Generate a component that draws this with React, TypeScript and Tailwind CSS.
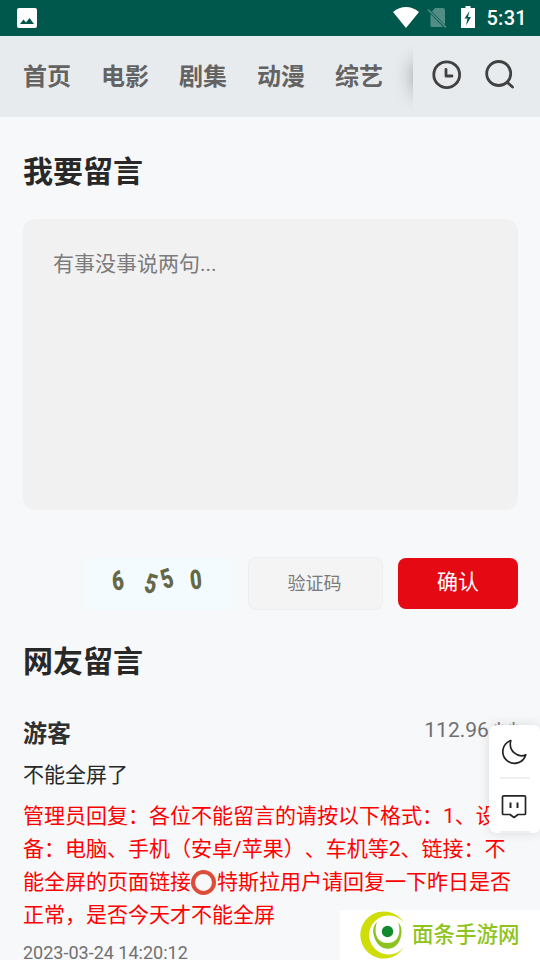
import React from 'react';

const NAV_ITEMS = ['首页', '电影', '剧集', '动漫', '综艺'];

const CAPTCHA = [
  { char: '6', className: 'left-[26px] top-[13px] -rotate-6' },
  { char: '5', className: 'left-[59px] top-[16px] rotate-[15deg]' },
  { char: '5', className: 'left-[75px] top-[11px] -rotate-[18deg]' },
  { char: '0', className: 'left-[104px] top-[12px] -rotate-6' },
];

function StatusBar() {
  return (
    <div className="flex h-9 items-center bg-[#00574b] pl-[17px] pr-[13px] text-white">
      <svg width="20" height="20" viewBox="0 0 20 20" className="block">
        <path fill="currentColor" fillRule="evenodd" d="M2 0h16q2 0 2 2v16q0 2-2 2H2q-2 0-2-2V2Q0 0 2 0Zm1 16h14l-4.500-6-3.500 4.600-2.500-3L3 16Z" />
      </svg>
      <svg width="83" height="24" viewBox="0 0 83 24" className="ml-auto mr-[10px] block">
        <path fill="currentColor" d="M0 6C8-.7 18-.7 26 6L13 22Z" />
        <g opacity=".32">
          <path fill="currentColor" d="M42 2h8q2 0 2 2v15L39 5.500Z M37.500 8l12.800 13H39q-1.500 0-1.500-1.500Z" />
          <path stroke="currentColor" strokeWidth="1.600" d="m35 3.500 18 18" />
        </g>
        <path fill="currentColor" fillRule="evenodd" d="M72.500 0h5v2h4.500v20h-14V2h4.500ZM76.500 5l-5 7.500h3l-1.500 7 5-8.500h-3Z" />
      </svg>
      <span className="font-['Roboto',sans-serif] text-[20px] font-medium leading-9 tracking-[0.3px]">5:31</span>
    </div>
  );
}

function Header() {
  return (
    <header className="flex h-[81px] items-center bg-[#e8ebee] pb-1">
      <nav className="flex h-[66px] w-[413px] items-center gap-[30px] overflow-hidden pl-[23px] pt-1 text-[24px] font-bold text-[#636363]">
        {NAV_ITEMS.map((item) => (
          <a key={item} className="shrink-0 whitespace-nowrap">{item}</a>
        ))}
        <span className="ml-[2px] h-[30px] w-5 shrink-0 shadow-[0_0_20px_rgba(0,0,0,0.4)]" />
      </nav>
      <svg width="30" height="30" viewBox="0 0 30 30" fill="none" stroke="#414141" strokeWidth="2.800" className="ml-[19px]">
        <circle cx="14.700" cy="14.700" r="12.900" />
        <path strokeLinecap="round" strokeLinejoin="round" d="M14 9.500V16h6" />
      </svg>
      <svg width="30" height="30" viewBox="0 0 30 30" fill="none" stroke="#414141" strokeWidth="2.800" className="ml-[23px]">
        <circle cx="13.700" cy="13.500" r="12" />
        <path strokeLinecap="round" d="m22.500 22.500 5 4.500" />
      </svg>
    </header>
  );
}

function Captcha() {
  return (
    <div className="relative h-[52px] w-[147px] bg-[#f3fbff]">
      {CAPTCHA.map((digit, i) => (
        <span
          key={i}
          className={`absolute flex w-3 scale-x-[0.75] justify-center font-['Roboto',sans-serif] text-[27px] font-black leading-5 text-[#656846] ${digit.className}`}
        >
          {digit.char}
        </span>
      ))}
    </div>
  );
}

function FloatingTools() {
  return (
    <div className="absolute left-[489px] top-[725px] flex h-[108px] w-[51px] flex-col items-center overflow-hidden rounded-l-lg rounded-r-md bg-white shadow-[0_0_12px_rgba(0,0,0,0.12)]">
      <svg width="26" height="26" viewBox="0 0 26 26" fill="none" stroke="#242424" strokeWidth="1.700" className="mr-[2px] mt-[14px] shrink-0">
        <path strokeLinejoin="round" d="M9.800 1.500A11.700 11.700 0 1 0 24.800 15.800C17 19.500 7 12 9.800 1.500Z" />
      </svg>
      <div className="mt-3 h-[2px] w-[30px] shrink-0 bg-[#efefef]" />
      <svg width="26" height="26" viewBox="0 0 26 26" fill="none" stroke="#242424" strokeWidth="1.700" className="mr-[2px] mt-[15px] shrink-0">
        <path strokeLinejoin="round" d="M2.500 1.800h21q1 0 1 1v16.700q0 1-1 1H17l-4 3-4-3H2.500q-1 0-1-1V2.800q0-1 1-1Z" />
        <path strokeWidth="2" d="M9.500 8.500v5.500M16.500 8.500v5.500" />
      </svg>
      <div className="mt-auto h-[2px] w-[30px] shrink-0 bg-[#efefef]" />
    </div>
  );
}

function SiteMark() {
  return (
    <div className="absolute left-[340px] top-[910px] flex h-[50px] w-[200px] items-center bg-white pl-5">
      <svg width="46" height="48" viewBox="0 0 46 48">
        <path fill="#cfdd08" d="M44 12A23.500 23.500 0 1 0 44 36A19.500 19.500 0 1 1 44 12Z" />
        <path fill="#8dc321" d="M17 11C12 16 13 22 14 25C18 42 38 42 41 25C42 20 42 16 38 11C41 19 40 32 27.500 32C15 32 14 19 17 11Z" />
        <circle cx="27.500" cy="20.500" r="5.700" fill="#118a2d" />
      </svg>
      <span className="ml-[6px] whitespace-nowrap text-[21.500px] font-medium leading-8 text-[#8fc420]">面条手游网</span>
    </div>
  );
}

export default function App() {
  return (
    <div className="relative h-[960px] w-[540px] overflow-hidden bg-[#f7f8fa] font-['Roboto','Noto_Sans_CJK_SC',sans-serif] text-[#282828] [text-spacing-trim:space-all]">
      <StatusBar />
      <Header />
      <main className="pl-[23px] pr-[22px]">
        <h2 className="pt-[33px] text-[30px] font-bold leading-[44px]">我要留言</h2>
        <textarea
          className="mt-[25px] block h-[291px] w-full resize-none rounded-xl bg-[#f1f1f1] px-[30px] py-[29px] text-[21px] leading-8 placeholder:text-[#7b7b7b]"
          placeholder="有事没事说两句..."
        />
        <div className="mt-[47px] flex h-[53px] items-center justify-end gap-[15px]">
          <Captcha />
          <input
            className="h-[53px] w-[135px] rounded-lg border border-[#eeeeee] bg-[#f4f4f4] pb-px pr-[2px] text-center text-[18px] placeholder:text-[#7b7b7b]"
            placeholder="验证码"
          />
          <button className="h-[51px] w-[120px] rounded-lg bg-[#e50914] pb-[2px] text-[21px] text-white">确认</button>
        </div>
        <h2 className="mt-[30px] text-[30px] font-bold leading-[44px]">网友留言</h2>
        <article className="mt-[33px]">
          <div className="flex h-[34px] justify-between">
            <h3 className="text-[24px] font-bold leading-[34px] text-[#303030]">游客</h3>
            <span className="text-[21px] leading-[27px] text-[#707070]">112.96.*.*</span>
          </div>
          <p className="mt-2 text-[21px] leading-[33px]">不能全屏了</p>
          <p className="mt-2 text-[21px] leading-[33px] text-[#ff0000]">
            <span className="block whitespace-nowrap">管理员回复：各位不能留言的请按以下格式：1、设</span>
            <span className="block whitespace-nowrap">备：电脑、手机（安卓/苹果）、车机等2、链接：不</span>
            <span className="flex items-center whitespace-nowrap">
              能全屏的页面链接
              <span className="mb-px mr-px h-[25px] w-[25px] shrink-0 rounded-full border-4 border-[#dd4b39]" />
              特斯拉用户请回复一下昨日是否
            </span>
            <span className="block whitespace-nowrap">正常，是否今天才不能全屏</span>
          </p>
          <time className="mt-[7px] block text-[18px] leading-[28px] text-[#707070]">2023-03-24 14:20:12</time>
        </article>
      </main>
      <FloatingTools />
      <SiteMark />
    </div>
  );
}
